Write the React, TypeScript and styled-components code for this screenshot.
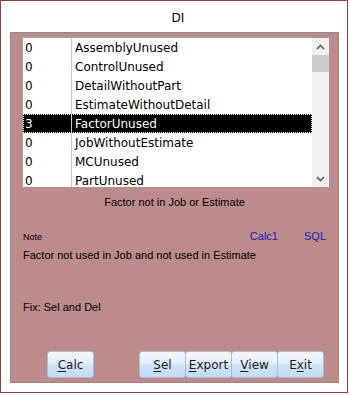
import React from "react";
import styled, {createGlobalStyle} from "styled-components";

const GlobalStyle = createGlobalStyle`
  html, body {
    margin: 0;
    padding: 0;
    background: #FFFFFF;
  }
  body {
    font-family: "DejaVu Sans", "Liberation Sans", sans-serif;
  }
`;

const Frame = styled.div`
  box-sizing: border-box;
  width: 348px;
  height: 393px;
  border: 1px solid #8B3F3F;
  background: #FFFFFF;
  display: flex;
  flex-direction: column;
`;

const Title = styled.div`
  height: 31px;
  display: flex;
  align-items: center;
  justify-content: center;
  padding-left: 8px;
  padding-top: 2px;
  box-sizing: border-box;
  font-size: 12px;
  color: #000;
`;

const Panel = styled.div`
  box-sizing: border-box;
  margin-left: 9px;
  width: 329px;
  height: 351px;
  background: #BC8C8C;
  border-top: 1px solid #8C8C8C;
  border-left: 1px solid #8C8C8C;
  border-right: 1px solid #A88080;
  border-bottom: 1px solid #A88080;
  display: flex;
  flex-direction: column;
`;

const ListBox = styled.div`
  box-sizing: border-box;
  margin: 4px 0 0 11px;
  width: 307px;
  height: 150px;
  background: #FFFFFF;
  border-top: 1px solid #A0A0A0;
  border-left: 1px solid #A0A0A0;
  display: flex;
  overflow: hidden;
`;

const Rows = styled.div`
  flex: 1;
  display: flex;
  flex-direction: column;
`;

const Row = styled.div<{$selected?: boolean}>`
  box-sizing: border-box;
  height: 19px;
  flex-shrink: 0;
  display: grid;
  grid-template-columns: 48px auto;
  align-items: center;
  font-size: 12px;
  color: ${({$selected}) => ($selected ? "#FFFFFF" : "#000000")};
  background: ${({$selected}) => ($selected ? "#000000" : "transparent")};
  outline: ${({$selected}) => ($selected ? "1px dotted #FFFFFF" : "none")};
  outline-offset: -1px;
`;

const Cell = styled.div<{$divider?: boolean}>`
  height: 100%;
  display: flex;
  align-items: center;
  padding-left: ${({$divider}) => ($divider ? "3px" : "2px")};
  border-left: ${({$divider}) => ($divider ? "1px solid #C8C8C8" : "none")};
  white-space: nowrap;
`;

const ScrollBar = styled.div`
  width: 17px;
  flex-shrink: 0;
  background: #F0F0F0;
  display: flex;
  flex-direction: column;
  align-items: stretch;
`;

const ScrollArrow = styled.div`
  height: 17px;
  display: flex;
  align-items: center;
  justify-content: center;
`;

const ScrollThumb = styled.div`
  height: 17px;
  background: #CDCDCD;
`;

const ScrollTrack = styled.div`
  flex: 1;
`;

const Caption = styled.div`
  margin-top: 9px;
  text-align: center;
  font-family: "Liberation Sans", sans-serif;
  font-size: 11px;
  color: #000;
`;

const NoteRow = styled.div`
  margin-top: 22px;
  display: flex;
  align-items: baseline;
  padding: 0 12px 0 12px;
`;

const NoteLabel = styled.div`
  flex: 1;
  font-family: "Liberation Sans", sans-serif;
  font-size: 9px;
  color: #000;
`;

const Link = styled.div<{$gap: number}>`
  margin-left: ${({$gap}) => $gap}px;
  font-family: "Liberation Sans", sans-serif;
  font-size: 11px;
  color: #1A1AB0;
`;

const Text = styled.div<{$top: number}>`
  margin-top: ${({$top}) => $top}px;
  padding-left: 12px;
  font-family: "Liberation Sans", sans-serif;
  font-size: 11px;
  color: #000;
`;

const ButtonRow = styled.div`
  margin-top: auto;
  margin-bottom: 4px;
  display: flex;
  padding-left: 36px;
`;

const Button = styled.div<{$gap?: number}>`
  box-sizing: border-box;
  width: 47px;
  height: 27px;
  margin-left: ${({$gap}) => $gap ?? 0}px;
  margin-right: -1px;
  border: 1px solid #A8BED6;
  border-radius: 3px;
  background: linear-gradient(#F3F8FD 0%, #E3EEFA 45%, #CFE2F6 55%, #C4DBF3 100%);
  display: flex;
  align-items: center;
  justify-content: center;
  font-size: 12px;
  color: #1A1A1A;

  u {
    text-decoration: underline;
    text-underline-offset: 2px;
  }
`;

const items: [string, string][] = [
    ["0", "AssemblyUnused"],
    ["0", "ControlUnused"],
    ["0", "DetailWithoutPart"],
    ["0", "EstimateWithoutDetail"],
    ["3", "FactorUnused"],
    ["0", "JobWithoutEstimate"],
    ["0", "MCUnused"],
    ["0", "PartUnused"],
];

const Chevron = (props: {up?: boolean}) => (
    <svg width="9" height="6" viewBox="0 0 9 6">
        <path
            d={props.up ? "M1 5 L4.5 1.5 L8 5" : "M1 1 L4.5 4.5 L8 1"}
            fill="none"
            stroke="#606060"
            strokeWidth="1.6"
        />
    </svg>
);

const App = () => {
    return (
        <>
            <GlobalStyle/>
            <Frame>
                <Title>DI</Title>
                <Panel>
                    <ListBox>
                        <Rows>
                            {items.map(([count, name], i) => (
                                <Row key={name} $selected={i === 4}>
                                    <Cell>{count}</Cell>
                                    <Cell $divider>{name}</Cell>
                                </Row>
                            ))}
                        </Rows>
                        <ScrollBar>
                            <ScrollArrow><Chevron up/></ScrollArrow>
                            <ScrollThumb/>
                            <ScrollTrack/>
                            <ScrollArrow><Chevron/></ScrollArrow>
                        </ScrollBar>
                    </ListBox>
                    <Caption>Factor not in Job or Estimate</Caption>
                    <NoteRow>
                        <NoteLabel>Note</NoteLabel>
                        <Link $gap={0}>Calc1</Link>
                        <Link $gap={26}>SQL</Link>
                    </NoteRow>
                    <Text $top={7}>Factor not used in Job and not used in Estimate</Text>
                    <Text $top={40}>Fix: Sel and Del</Text>
                    <ButtonRow>
                        <Button><u>C</u>alc</Button>
                        <Button $gap={46}><u>S</u>el</Button>
                        <Button><u>E</u>xport</Button>
                        <Button><u>V</u>iew</Button>
                        <Button>E<u>x</u>it</Button>
                    </ButtonRow>
                </Panel>
            </Frame>
        </>
    );
};

export default App;
